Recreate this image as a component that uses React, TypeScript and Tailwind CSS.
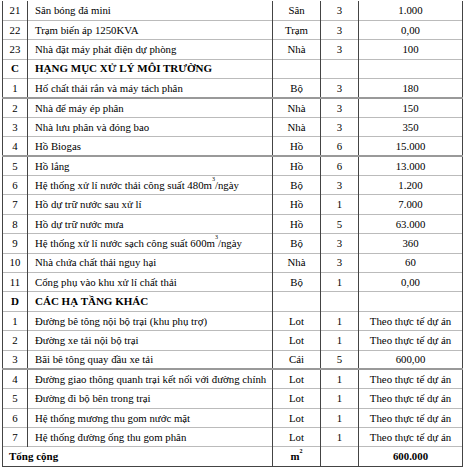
import React from "react";

type Row = {
	no: string;
	name: React.ReactNode;
	unit?: string;
	qty?: string;
	value?: string;
	head?: boolean;
	heavy?: boolean;
};

const m3 = (
	<>
		m<sup className="text-[6px] align-super">3</sup>
	</>
);

const rows: Row[] = [
	{ no: "21", name: "Sân bóng đá mini", unit: "Sân", qty: "3", value: "1.000" },
	{ no: "22", name: "Trạm biến áp 1250KVA", unit: "Trạm", qty: "3", value: "0,00" },
	{ no: "23", name: "Nhà đặt máy phát điện dự phòng", unit: "Nhà", qty: "3", value: "100" },
	{ no: "C", name: "HẠNG MỤC XỬ LÝ MÔI TRƯỜNG", head: true },
	{ no: "1", name: "Hố chất thải rắn và máy tách phân", unit: "Bộ", qty: "3", value: "180", heavy: true },
	{ no: "2", name: "Nhà để máy ép phân", unit: "Nhà", qty: "3", value: "150" },
	{ no: "3", name: "Nhà lưu phân và đóng bao", unit: "Nhà", qty: "3", value: "350" },
	{ no: "4", name: "Hồ Biogas", unit: "Hồ", qty: "6", value: "15.000", heavy: true },
	{ no: "5", name: "Hồ lắng", unit: "Hồ", qty: "6", value: "13.000" },
	{
		no: "6",
		name: <>Hệ thống xử lí nước thải công suất 480{m3}/ngày</>,
		unit: "Bộ",
		qty: "3",
		value: "1.200",
	},
	{ no: "7", name: "Hồ dự trữ nước sau xử lí", unit: "Hồ", qty: "1", value: "7.000" },
	{ no: "8", name: "Hồ dự trữ nước mưa", unit: "Hồ", qty: "5", value: "63.000" },
	{
		no: "9",
		name: <>Hệ thống xử lí nước sạch công suất 600{m3}/ngày</>,
		unit: "Bộ",
		qty: "3",
		value: "360",
	},
	{ no: "10", name: "Nhà chứa chất thải nguy hại", unit: "Nhà", qty: "3", value: "60" },
	{ no: "11", name: "Cổng phụ vào khu xử lí chất thải", unit: "Bộ", qty: "1", value: "0,00" },
	{ no: "D", name: "CÁC HẠ TẦNG KHÁC", head: true },
	{ no: "1", name: "Đường bê tông nội bộ trại (khu phụ trợ)", unit: "Lot", qty: "1", value: "Theo thực tế dự án" },
	{ no: "2", name: "Đường xe tải nội bộ trại", unit: "Lot", qty: "1", value: "Theo thực tế dự án" },
	{ no: "3", name: "Bãi bê tông quay đầu xe tải", unit: "Cái", qty: "5", value: "600,00", heavy: true },
	{ no: "4", name: "Đường giao thông quanh trại kết nối với đường chính", unit: "Lot", qty: "1", value: "Theo thực tế dự án" },
	{ no: "5", name: "Đường đi bộ bên trong trại", unit: "Lot", qty: "1", value: "Theo thực tế dự án" },
	{ no: "6", name: "Hệ thống mương thu gom nước mặt", unit: "Lot", qty: "1", value: "Theo thực tế dự án" },
	{ no: "7", name: "Hệ thống đường ống thu gom phân", unit: "Lot", qty: "1", value: "Theo thực tế dự án" },
];

export default function App() {
	return (
		<div className="w-[465px] h-[469px] bg-white overflow-hidden pt-px pl-[2px] text-black text-[10.8px] leading-none font-['Liberation_Serif','Times_New_Roman',serif]">
			<table className="w-[460px] table-fixed border-collapse font-['Liberation_Serif','Times_New_Roman',serif]">
				<colgroup>
					<col className="w-[25px]" />
					<col className="w-[245px]" />
					<col className="w-[48px]" />
					<col className="w-[38px]" />
					<col className="w-[104px]" />
				</colgroup>
				<tbody>
					{rows.map((r, i) => (
						<tr
							key={i}
							className={
								r.heavy
									? "h-[19.4px] border-b-2 border-b-[#999]"
									: "h-[19.4px] border-b border-b-[#bbb]"
							}
						>
							<td
								className={
									r.head
										? "border-x border-x-[#444] text-center font-bold text-[11px]"
										: "border-x border-x-[#444] text-center"
								}
							>
								{r.no}
							</td>
							<td
								className={
									r.head
										? "border-x border-x-[#444] pl-[7px] whitespace-nowrap font-bold text-[11px]"
										: "border-x border-x-[#444] pl-[7px] whitespace-nowrap"
								}
							>
								{r.name}
							</td>
							<td className="border-x border-x-[#444] text-center">{r.unit}</td>
							<td className="border-x border-x-[#444] text-center">{r.qty}</td>
							<td className="border-x border-x-[#444] text-center whitespace-nowrap">
								{r.value}
							</td>
						</tr>
					))}
					<tr className="h-[19.4px] border-y border-y-[#444]">
						<td
							colSpan={2}
							className="border-x border-x-[#444] pl-[6px] font-bold text-[11px]"
						>
							Tổng cộng
						</td>
						<td className="border-x border-x-[#444] text-center font-bold">
							m<sup className="text-[6px] align-super">2</sup>
						</td>
						<td className="border-x border-x-[#444]" />
						<td className="border-x border-x-[#444] text-center font-bold">600.000</td>
					</tr>
				</tbody>
			</table>
		</div>
	);
}
